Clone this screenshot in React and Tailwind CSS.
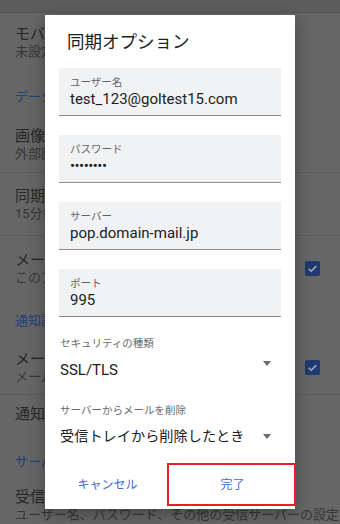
import React from 'react';

const jp = { fontFamily: 'Roboto, "Noto Sans CJK JP", sans-serif' };

function BgItem({ title, sub, h, border, check, extra = '', full }) {
  return (
    <div className={`flex items-center pl-[15px] pr-[20px] ${h} ${extra} ${border ? 'border-b border-[#5a5a5a]' : ''}`}>
      <div className="flex-1 min-w-0">
        <p className="w-[30px] overflow-hidden text-[15px] leading-[18px] text-[#262626] whitespace-nowrap">{title}</p>
        {sub && (
          <p className={`${full ? '' : 'w-[30px] overflow-hidden'} text-[13px] leading-[17px] text-[#363636] whitespace-nowrap`}>{sub}</p>
        )}
      </div>
      {check && (
        <div className="w-[15px] h-[15px] rounded-[2px] bg-[#1f3a70] flex items-center justify-center shrink-0">
          <svg viewBox="0 0 24 24" className="w-[13px] h-[13px]" fill="none" stroke="#a3abbd" strokeWidth="3">
            <path d="M5 12.5l4.5 4.5L19 7.5" />
          </svg>
        </div>
      )}
    </div>
  );
}

function Header({ text, h }) {
  return (
    <div className={`flex items-center pl-[15px] ${h}`}>
      <p className="w-[30px] overflow-hidden text-[13px] text-[#223f7e] whitespace-nowrap">{text}</p>
    </div>
  );
}

function Field({ label, value, first, dots }) {
  return (
    <div className={`${first ? 'mt-[14px]' : 'mt-[19px]'} h-[48px] bg-[#f1f2f4] border-b border-[#8c8c8c] px-[11px] pt-[8px]`}>
      <p className="text-[10.5px] leading-[14px] text-[#5f6368]">{label}</p>
      <p className={`text-[15px] leading-[18px] text-[#202124] ${dots ? 'tracking-[-0.5px]' : ''}`}>{value}</p>
    </div>
  );
}

function Arrow() {
  return (
    <svg viewBox="0 0 8 5" className="w-[8px] h-[5px]">
      <path d="M0 0h8L4 5z" fill="#6b6b6b" />
    </svg>
  );
}

export default function App() {
  return (
    <div className="relative w-[340px] h-[524px] overflow-hidden bg-[#666666]" style={jp}>
      <div className="h-[13px] bg-[#5d5d5d] border-b border-[#575757]" />
      <BgItem h="h-[65px]" extra="pb-[7px]" title="モバイルデータ使用時の同期" sub="未設定" />
      <Header h="h-[38px]" text="データ使用量" />
      <BgItem h="h-[57px]" border title="画像のダウンロード" sub="外部画像を自動的に表示" />
      <BgItem h="h-[63px]" border title="同期頻度" sub="15分毎" />
      <BgItem h="h-[64px]" check title="メールの同期" sub="このアカウントのメールを同期" />
      <Header h="h-[41px]" text="通知設定" />
      <BgItem h="h-[54px]" border check title="メール通知" sub="メールの受信時に通知" />
      <BgItem h="h-[42px]" extra="pb-[4px]" title="通知音を選択" />
      <Header h="h-[50px]" text="サーバー設定" />
      <BgItem h="h-[40px]" extra="items-start pt-[1px]" full title="受信設定" sub="ユーザー名、パスワード、その他の受信サーバーの設定" />

      <div className="absolute left-[45px] top-[15px] w-[250px] h-[494px] bg-white shadow-[0_4px_16px_rgba(0,0,0,0.35)] px-[14px]">
        <h2 className="pt-[15px] pl-[8px] text-[17.5px] leading-[24px] text-[#202124] font-normal">同期オプション</h2>
        <Field first label="ユーザー名" value="test_123@goltest15.com" />
        <Field dots label="パスワード" value="••••••••" />
        <Field label="サーバー" value="pop.domain-mail.jp" />
        <Field label="ポート" value="995" />

        <p className="mt-[20px] pl-[1px] text-[10.5px] leading-[14px] text-[#6b6b6b]">セキュリティの種類</p>
        <div className="mt-[9px] h-[20px] flex items-center pl-[1px] pr-[10px]">
          <span className="flex-1 text-[15px] leading-[20px] text-[#202124]">SSL/TLS</span>
          <span className="-mt-[13px]"><Arrow /></span>
        </div>

        <p className="mt-[24px] pl-[1px] text-[10.5px] leading-[14px] text-[#6b6b6b]">サーバーからメールを削除</p>
        <div className="mt-[8px] h-[20px] flex items-center pl-[1px] pr-[10px]">
          <span className="flex-1 text-[14.2px] leading-[20px] text-[#202124]">受信トレイから削除したとき</span>
          <Arrow />
        </div>

        <div className="mt-[17px] -mx-[14px] h-[43px] flex">
          <button className="w-1/2 h-full text-[12px] text-[#4169d6]">キャンセル</button>
          <div className="relative w-1/2 h-full">
            <button className="w-full h-full text-[12px] text-[#4169d6]">完了</button>
            <div className="absolute -left-[3px] -right-[1px] top-0 bottom-0 border-[2.5px] border-[#ec1c24] pointer-events-none" />
          </div>
        </div>
      </div>
    </div>
  );
}
